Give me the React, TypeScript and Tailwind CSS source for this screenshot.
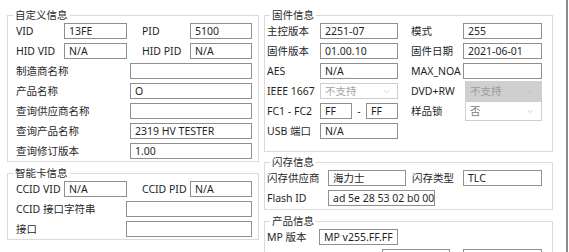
import { ChevronDown } from "lucide-react";
import type { ReactNode } from "react";

// Plain text box: 16px tall, grey 1px border.
function Field({ value = "", className = "" }: { value?: string; className?: string }) {
  return (
    <div
      className={`h-[16px] shrink-0 overflow-hidden whitespace-nowrap border border-[#8f8f8f] bg-white pl-[4px] leading-[14px] text-[#1f1f1f] ${className}`}
    >
      {value}
    </div>
  );
}

// Combo box, either disabled-looking (white, faded) or greyed fill.
function Combo({
  value,
  className = "",
  filled = false,
}: {
  value: string;
  className?: string;
  filled?: boolean;
}) {
  return (
    <div
      className={`flex shrink-0 items-center justify-between border pl-[4px] pr-[6px] ${
        filled
          ? "border-[#cfcfcf] bg-[#cfcfcf] text-[#9c9c9c]"
          : "border-[#cdcdcd] bg-white text-[#a3a3a3]"
      } ${className}`}
    >
      <span>{value}</span>
      <ChevronDown size={9} strokeWidth={1.5} className="text-[#b4b4b4]" />
    </div>
  );
}

function Group({
  title,
  className = "",
  children,
}: {
  title: string;
  className?: string;
  children: ReactNode;
}) {
  return (
    <fieldset className={`border border-[#dadada] ${className}`}>
      <legend className="ml-[5px] px-[2px] leading-[12px] text-[#2a2a2a]">{title}</legend>
      {children}
    </fieldset>
  );
}

function Row({ children }: { children: ReactNode }) {
  return <div className="flex h-[20px] items-center">{children}</div>;
}

function Label({ text, className = "" }: { text: string; className?: string }) {
  return <span className={`shrink-0 whitespace-nowrap text-[#1f1f1f] ${className}`}>{text}</span>;
}

export default function App() {
  return (
    <div className="flex h-[252px] w-[569px] overflow-hidden bg-white font-['Noto_Sans','Noto_Sans_CJK_SC',sans-serif] text-[10.5px] leading-[12px]">
      {/* left column */}
      <div className="ml-[7px] flex w-[252px] shrink-0 flex-col pt-[9px]">
        <Group title="自定义信息">
          <div className="pl-[8px]">
            <Row>
              <Label text="VID" className="w-[48px]" />
              <Field value="13FE" className="w-[63px]" />
              <Label text="PID" className="ml-[15px] w-[48px]" />
              <Field value="5100" className="w-[62px]" />
            </Row>
            <Row>
              <Label text="HID VID" className="w-[48px]" />
              <Field value="N/A" className="w-[63px]" />
              <Label text="HID PID" className="ml-[15px] w-[48px]" />
              <Field value="N/A" className="w-[62px]" />
            </Row>
            <Row>
              <Label text="制造商名称" className="w-[114px]" />
              <Field className="w-[122px]" />
            </Row>
            <Row>
              <Label text="产品名称" className="w-[114px]" />
              <Field value="O" className="w-[122px]" />
            </Row>
            <Row>
              <Label text="查询供应商名称" className="w-[114px]" />
              <Field className="w-[122px]" />
            </Row>
            <Row>
              <Label text="查询产品名称" className="w-[114px]" />
              <Field value="2319 HV TESTER" className="w-[122px]" />
            </Row>
            <Row>
              <Label text="查询修订版本" className="w-[114px]" />
              <Field value="1.00" className="w-[122px]" />
            </Row>
          </div>
        </Group>

        <Group title="智能卡信息" className="mt-[5px]">
          <div className="pl-[8px]">
            <Row>
              <Label text="CCID VID" className="w-[48px]" />
              <Field value="N/A" className="w-[63px]" />
              <Label text="CCID PID" className="ml-[15px] w-[48px]" />
              <Field value="N/A" className="w-[62px]" />
            </Row>
            <Row>
              <Label text="CCID 接口字符串" className="w-[110px]" />
              <Field className="w-[126px]" />
            </Row>
            <Row>
              <Label text="接口" className="w-[110px]" />
              <Field className="w-[126px]" />
            </Row>
          </div>
        </Group>
      </div>

      {/* right column */}
      <div className="ml-[5px] flex w-[289px] shrink-0 flex-col pt-[9px]">
        <Group title="固件信息">
          <div className="pb-[10px] pl-[2px]">
            <Row>
              <Label text="主控版本" className="w-[53px]" />
              <Field value="2251-07" className="w-[78px]" />
              <Label text="模式" className="ml-[13px] w-[52px]" />
              <Field value="255" className="w-[79px]" />
            </Row>
            <Row>
              <Label text="固件版本" className="w-[53px]" />
              <Field value="01.00.10" className="w-[78px]" />
              <Label text="固件日期" className="ml-[13px] w-[52px]" />
              <Field value="2021-06-01" className="w-[79px]" />
            </Row>
            <Row>
              <Label text="AES" className="w-[53px]" />
              <Field value="N/A" className="w-[78px]" />
              <Label text="MAX_NOA" className="ml-[13px] w-[52px]" />
              <Field className="w-[79px]" />
            </Row>
            <Row>
              <Label text="IEEE 1667" className="w-[53px]" />
              <Combo value="不支持" className="h-[16px] w-[78px]" />
              <Label text="DVD+RW" className="ml-[13px] w-[54px]" />
              <Combo value="不支持" filled className="h-[20px] w-[77px]" />
            </Row>
            <Row>
              <Label text="FC1 - FC2" className="w-[53px]" />
              <Field value="FF" className="w-[32px]" />
              <span className="w-[14px] text-center text-[#1f1f1f]">-</span>
              <Field value="FF" className="w-[32px]" />
              <Label text="样品锁" className="ml-[13px] w-[54px]" />
              <Combo value="否" className="h-[20px] w-[77px] !text-[#7a7a7a]" />
            </Row>
            <Row>
              <Label text="USB 端口" className="w-[53px]" />
              <Field value="N/A" className="w-[78px]" />
            </Row>
          </div>
        </Group>

        <Group title="闪存信息" className="mt-[4px]">
          <div className="pb-[1px] pl-[2px]">
            <Row>
              <Label text="闪存供应商" className="w-[61px]" />
              <Field value="海力士" className="w-[78px]" />
              <Label text="闪存类型" className="ml-[6px] w-[51px]" />
              <Field value="TLC" className="w-[79px]" />
            </Row>
            <Row>
              <Label text="Flash ID" className="w-[61px]" />
              <Field value="ad 5e 28 53 02 b0 00 00" className="w-[107px]" />
            </Row>
          </div>
        </Group>

        <Group title="产品信息" className="mt-[5px]">
          <div className="pl-[2px]">
            <Row>
              <Label text="MP 版本" className="w-[52px]" />
              <Field value="MP v255.FF.FF" className="w-[79px]" />
            </Row>
            <Row>
              <Label text="MP 工具版本日期" className="w-[115px]" />
              <Field className="w-[68px]" />
              <Field className="ml-[13px] w-[79px]" />
            </Row>
          </div>
        </Group>
      </div>

      {/* window edge */}
      <div className="ml-auto mr-[1px] w-[2px] self-stretch bg-[#8c8c8c]" />
    </div>
  );
}
